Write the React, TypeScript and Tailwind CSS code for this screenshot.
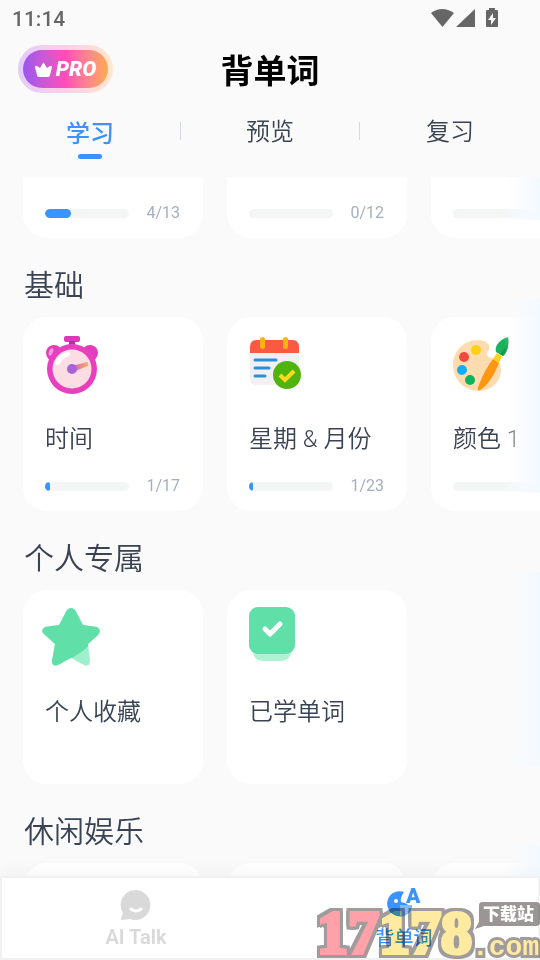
import React from 'react';

interface Deck {
  id: string;
  title?: string;
  icon?: React.ReactNode;
  done?: number;
  total?: number;
}

interface Section {
  id: string;
  heading: string;
  decks: Deck[];
}

const StopwatchIcon = () => (
  <svg width="56" height="60" viewBox="0 0 56 60">
    <rect x="19" y="1" width="16" height="6" rx="2" fill="#d93ab8" />
    <rect x="24" y="6" width="6" height="7" fill="#c22aa2" />
    <circle cx="9" cy="18" r="8" fill="#e23dbd" />
    <circle cx="45" cy="18" r="8" fill="#e23dbd" />
    <ellipse cx="6" cy="17" rx="2" ry="4" transform="rotate(20 6 17)" fill="#f79ae0" />
    <circle cx="27" cy="34" r="25" fill="#e83fbe" />
    <circle cx="27" cy="34" r="19.500" fill="#fddde4" />
    <path d="M10 28q3-9 13-11q4 1 1 4q-7 2-9 8q-4 3-5-1z" fill="#fff" />
    <path d="M27 31l15-4q2 1 1 4l-15 6z" fill="url(#hand)" />
    <circle cx="27" cy="34" r="5" fill="#a962d8" />
    <defs>
      <linearGradient id="hand">
        <stop offset="0" stopColor="#d65fc6" />
        <stop offset="1" stopColor="#fbb062" />
      </linearGradient>
    </defs>
  </svg>
);

const CalendarIcon = () => (
  <svg width="56" height="60" viewBox="0 0 56 60">
    <rect x="1" y="5" width="49" height="45" rx="6" fill="#f1f1f3" />
    <path d="M1 18v-6q0-7 7-7h35q7 0 7 7v6z" fill="#fb5a42" />
    <rect x="11" y="2" width="5" height="12" rx="2.500" fill="#fbb30f" />
    <rect x="34" y="2" width="5" height="12" rx="2.500" fill="#fbb30f" />
    <path d="M6 25h21M6 33h14M6 41h10" stroke="#2f8fd3" strokeWidth="3" strokeLinecap="round" />
    <circle cx="38" cy="40" r="14" fill="#4fb50e" />
    <path d="M31 40l5 5l9-9" stroke="#ffd91c" strokeWidth="4" fill="none" />
  </svg>
);

const PaletteIcon = () => (
  <svg width="60" height="60" viewBox="0 0 60 60">
    <path
      d="M25 5C11 5 0 16 0 30c0 15 12 26 25 26c13 0 23-9 23-21c0-8-5-11-9-12c-4-1-7-3-4-7c4-5-1-11-10-11z"
      fill="#ffdcb0"
    />
    <circle cx="23" cy="15" r="5" fill="#fdd017" />
    <circle cx="11" cy="22" r="5" fill="#f1493b" />
    <circle cx="9" cy="35" r="5" fill="#13adf2" />
    <circle cx="17" cy="45" r="5" fill="#0db35a" />
    <path d="M40 24l6 4c-4 10-11 23-19 27q-3 1-2-2c3-10 9-21 15-29z" fill="#fd9611" />
    <path d="M44 18l5 3l-3 7l-6-4z" fill="#ffd21a" />
    <path d="M55 2c1 7 0 15-5 19l-7-4c-2-7 5-13 12-15z" fill="#18b45c" />
    <path d="M55 2c1 7 0 15-5 19l-3-2c5-5 7-10 8-17z" fill="#0f9c4c" />
  </svg>
);

const StarIcon = () => (
  <svg width="60" height="60" viewBox="3 1 60 60" overflow="visible">
    <defs>
      <clipPath id="star">
        <path d="M25 3q4-4 8 0l8 15l14 2q5 3 1 8l-10 9l2 17q0 6-6 4l-13-7l-13 7q-6 2-6-4l3-17l-11-10q-4-4 1-7l14-2z" />
      </clipPath>
    </defs>
    <g clipPath="url(#star)">
      <rect width="60" height="60" fill="#a0efcc" />
      <path d="M0 0h60v26C49 38 38 48 13 60H0z" fill="#61dfa9" />
    </g>
  </svg>
);

const CheckedBookIcon = () => (
  <svg width="56" height="60" viewBox="0 2 56 60" overflow="visible">
    <rect x="4" y="30" width="38" height="25" rx="9" fill="#aef1d3" />
    <rect y="1" width="46" height="47" rx="9" fill="#61dfa9" />
    <path d="M16 23l5 5l10-10" stroke="#fff" strokeWidth="5" strokeLinecap="round" strokeLinejoin="round" fill="none" />
  </svg>
);

const startedDecks: Deck[] = [
  { id: 'a', done: 4, total: 13 },
  { id: 'b', done: 0, total: 12 },
  { id: 'c', done: 0 },
];

const sections: Section[] = [
  {
    id: 'basic',
    heading: '基础',
    decks: [
      { id: 'time', title: '时间', icon: <StopwatchIcon />, done: 1, total: 17 },
      { id: 'week', title: '星期 & 月份', icon: <CalendarIcon />, done: 1, total: 23 },
      { id: 'color', title: '颜色 1', icon: <PaletteIcon />, done: 0 },
    ],
  },
  {
    id: 'mine',
    heading: '个人专属',
    decks: [
      { id: 'fav', title: '个人收藏', icon: <StarIcon /> },
      { id: 'learned', title: '已学单词', icon: <CheckedBookIcon /> },
    ],
  },
  {
    id: 'fun',
    heading: '休闲娱乐',
    decks: [{ id: 'f1' }, { id: 'f2' }, { id: 'f3' }],
  },
];

const DeckCard: React.FC<{ deck: Deck }> = ({ deck }) => (
  <button
    type="button"
    aria-label={deck.title ?? '单词卡'}
    className="flex h-[194px] w-[180px] shrink-0 flex-col rounded-3xl bg-white pt-[18px] pr-[23px] pb-[15px] pl-[22px] text-left"
  >
    <span className="block h-[60px]">{deck.icon}</span>
    <span className="mt-7 block h-8 text-2xl leading-8 font-[350] whitespace-nowrap text-[#394353]">{deck.title}</span>
    {deck.done !== undefined && (
      <span className="mt-auto flex h-5 items-center justify-between">
        <span className="block h-[9px] w-[84px] overflow-hidden rounded-full bg-[#f4f6f6]">
          <span
            className="block h-full rounded-full bg-[#3a93ff]"
            style={{ width: `${(deck.done / (deck.total ?? 1)) * 100}%` }}
          />
        </span>
        {deck.total !== undefined && (
          <span className="text-base leading-5 text-[#a6aec0]">
            {deck.done}/{deck.total}
          </span>
        )}
      </span>
    )}
  </button>
);

const DeckRow: React.FC<{ decks: Deck[] }> = ({ decks }) => (
  <div className="flex shrink-0 gap-6 overflow-hidden pl-[23px]">
    {decks.map(deck => (
      <DeckCard key={deck.id} deck={deck} />
    ))}
  </div>
);

const EdgeFade = () => (
  <div className="pointer-events-none absolute -top-[18px] right-0 h-[194px] w-9 bg-linear-to-r from-[#fafcfe]/0 via-[#f7fbff]/70 to-[#f2f9ff]" />
);

const StatusBar = () => (
  <div className="flex h-[38px] shrink-0 items-center justify-between pr-[41px] pl-3 text-[#666]">
    <span className="text-[21px] leading-6 font-medium">11:14</span>
    <svg width="68" height="22" viewBox="0 -1 68 22" fill="#666">
      <path d="M0 4Q11-4 23 4L11.500 18z" />
      <path d="M25 18L44 0v18z" />
      <path d="M55 2q0-1 1-1h2V-1h6v2h2q1 0 1 1v15q0 1-1 1H56q-1 0-1-1z" />
      <path d="M62 4l-5 7h3v5l5-7h-3z" fill="#fafafa" />
    </svg>
  </div>
);

const Header = () => (
  <header className="grid h-16 shrink-0 grid-cols-[1fr_auto_1fr] items-center">
    <button
      type="button"
      className="mb-[2px] ml-[18px] w-[95px] rounded-full bg-linear-to-r from-[#e2cdf9] via-[#ffcfe9] to-[#ffe8cc] p-[5px]"
    >
      <span className="flex h-[38px] items-center justify-center gap-1 rounded-full bg-linear-to-r from-[#9b55ee] via-[#ff4bb8] to-[#ffaa4c] text-white">
        <svg width="17" height="15" viewBox="0 0 17 15" fill="#fff">
          <path d="M2 4l3 2l3-5q0-1 1 0l3 5l3-2q2-1 2 1l-2 8q0 2-2 2H4q-2 0-2-2L0 5q0-2 2-1z" />
        </svg>
        <span className="text-[21px] leading-6 font-black italic">PRO</span>
      </span>
    </button>
    <h1 className="pt-1 text-[33px] leading-10 font-bold text-black">背单词</h1>
  </header>
);

const Tabs = () => (
  <nav className="grid h-[75px] shrink-0 grid-cols-3 text-2xl leading-8">
    <button type="button" className="flex flex-col items-center pt-4 font-medium text-[#3a93ff]">
      学习
      <span className="mt-1 h-[5px] w-6 rounded-full bg-[#3a93ff]" />
    </button>
    <div className="flex items-start justify-between">
      <span className="mt-5 h-[18px] w-px bg-[#d3dae3]" />
      <button type="button" className="pt-[14px] font-[350] text-[#394353]">
        预览
      </button>
      <span className="mt-5 h-[18px] w-px bg-[#d3dae3]" />
    </div>
    <button type="button" className="flex flex-col items-center pt-[14px] font-[350] text-[#394353]">
      复习
    </button>
  </nav>
);

const BottomNav = () => (
  <nav className="relative grid h-[84px] shrink-0 grid-cols-2 border-2 border-[#f1f1f1] bg-white leading-6 font-medium shadow-[0_-4px_16px_rgba(0,0,0,0.04)]">
    <button type="button" className="flex flex-col items-center pt-[11px] text-xl text-[#d9d9d9]">
      <svg width="32" height="32" viewBox="0 0 32 32">
        <path d="M16 1a15 15 0 1 1-6 29l-8 1q-1 0-1-1l2-6A15 15 0 0 1 16 1z" fill="#d9d9d9" />
        <path d="M11 20q5 4 10 0" stroke="#fff" strokeWidth="3" strokeLinecap="round" fill="none" />
      </svg>
      <span className="mt-1 leading-6 font-semibold">AI Talk</span>
    </button>
    <button type="button" className="flex flex-col items-center pt-[9px] text-[19px] text-[#3a93ff]">
      <svg width="36" height="34" viewBox="0 0 36 34" fill="#3a93ff" overflow="visible">
        <path d="M18 5q-4 6-3 10q6 1 8 4h3A12.500 12.500 0 1 1 18 5z" />
        <circle cx="10" cy="14" r="2" fill="#fff" />
        <path d="M14 18h12a12.500 12.500 0 0 1-12 12z" fill="#80b9ff" />
        <text x="20" y="16" fontSize="21" fontWeight="900">
          A
        </text>
      </svg>
      <span className="mt-[6px] leading-6">背单词</span>
    </button>
  </nav>
);

const SiteMark = () => (
  <svg
    width="224"
    height="62"
    viewBox="0 0 224 62"
    className="pointer-events-none absolute right-0 bottom-0 mix-blend-multiply"
    fontWeight="900"
  >
    <g
      strokeWidth="4"
      className="font-['Liberation_Serif'] [filter:drop-shadow(3px_0_0_#a09c9c)_drop-shadow(-3px_0_0_#a09c9c)_drop-shadow(0_3px_0_#a09c9c)_drop-shadow(0_-3px_0_#a09c9c)]"
    >
      <text x="1" y="55" fontSize="62">
        <tspan fill="#ffa1a9" stroke="#ffa1a9">17</tspan>
        <tspan fill="#ffeba0" stroke="#ffeba0">178</tspan>
      </text>
    </g>
    <path d="M166 4h54q4 0 4 4v16q0 4-4 4h-52l-9 3l4-7V8q0-4 3-4z" fill="#9b9696" />
    <text x="167" y="22" fontSize="17" fill="#fff">
      下载站
    </text>
    <text
      x="156"
      y="57"
      fontSize="28"
      fill="#ffeba0"
      stroke="#a09c9c"
      strokeWidth="6"
      paintOrder="stroke"
      className="font-['Liberation_Mono']"
    >
      .com
    </text>
  </svg>
);

export default function App() {
  return (
    <div className="relative flex h-screen flex-col overflow-hidden bg-[#fafafa] font-['Roboto','Noto_Sans_CJK_SC',sans-serif]">
      <StatusBar />
      <Header />
      <Tabs />
      <main className="min-h-0 flex-1 overflow-hidden">
        <div className="relative flex h-[61px] flex-col justify-end overflow-hidden">
          <DeckRow decks={startedDecks} />
          <div className="pointer-events-none absolute top-0 right-0 h-[43px] w-9 bg-linear-to-r from-[#fafcfe]/0 via-[#f7fbff]/70 to-[#f2f9ff]" />
        </div>
        {sections.map(section => (
          <section key={section.id}>
            <h2 className="flex h-[79px] items-center pt-4 pl-6 text-3xl leading-10 font-[350] text-[#394353]">
              {section.heading}
            </h2>
            <div className="relative">
              <DeckRow decks={section.decks} />
              <EdgeFade />
            </div>
          </section>
        ))}
      </main>
      <BottomNav />
      <SiteMark />
    </div>
  );
}
